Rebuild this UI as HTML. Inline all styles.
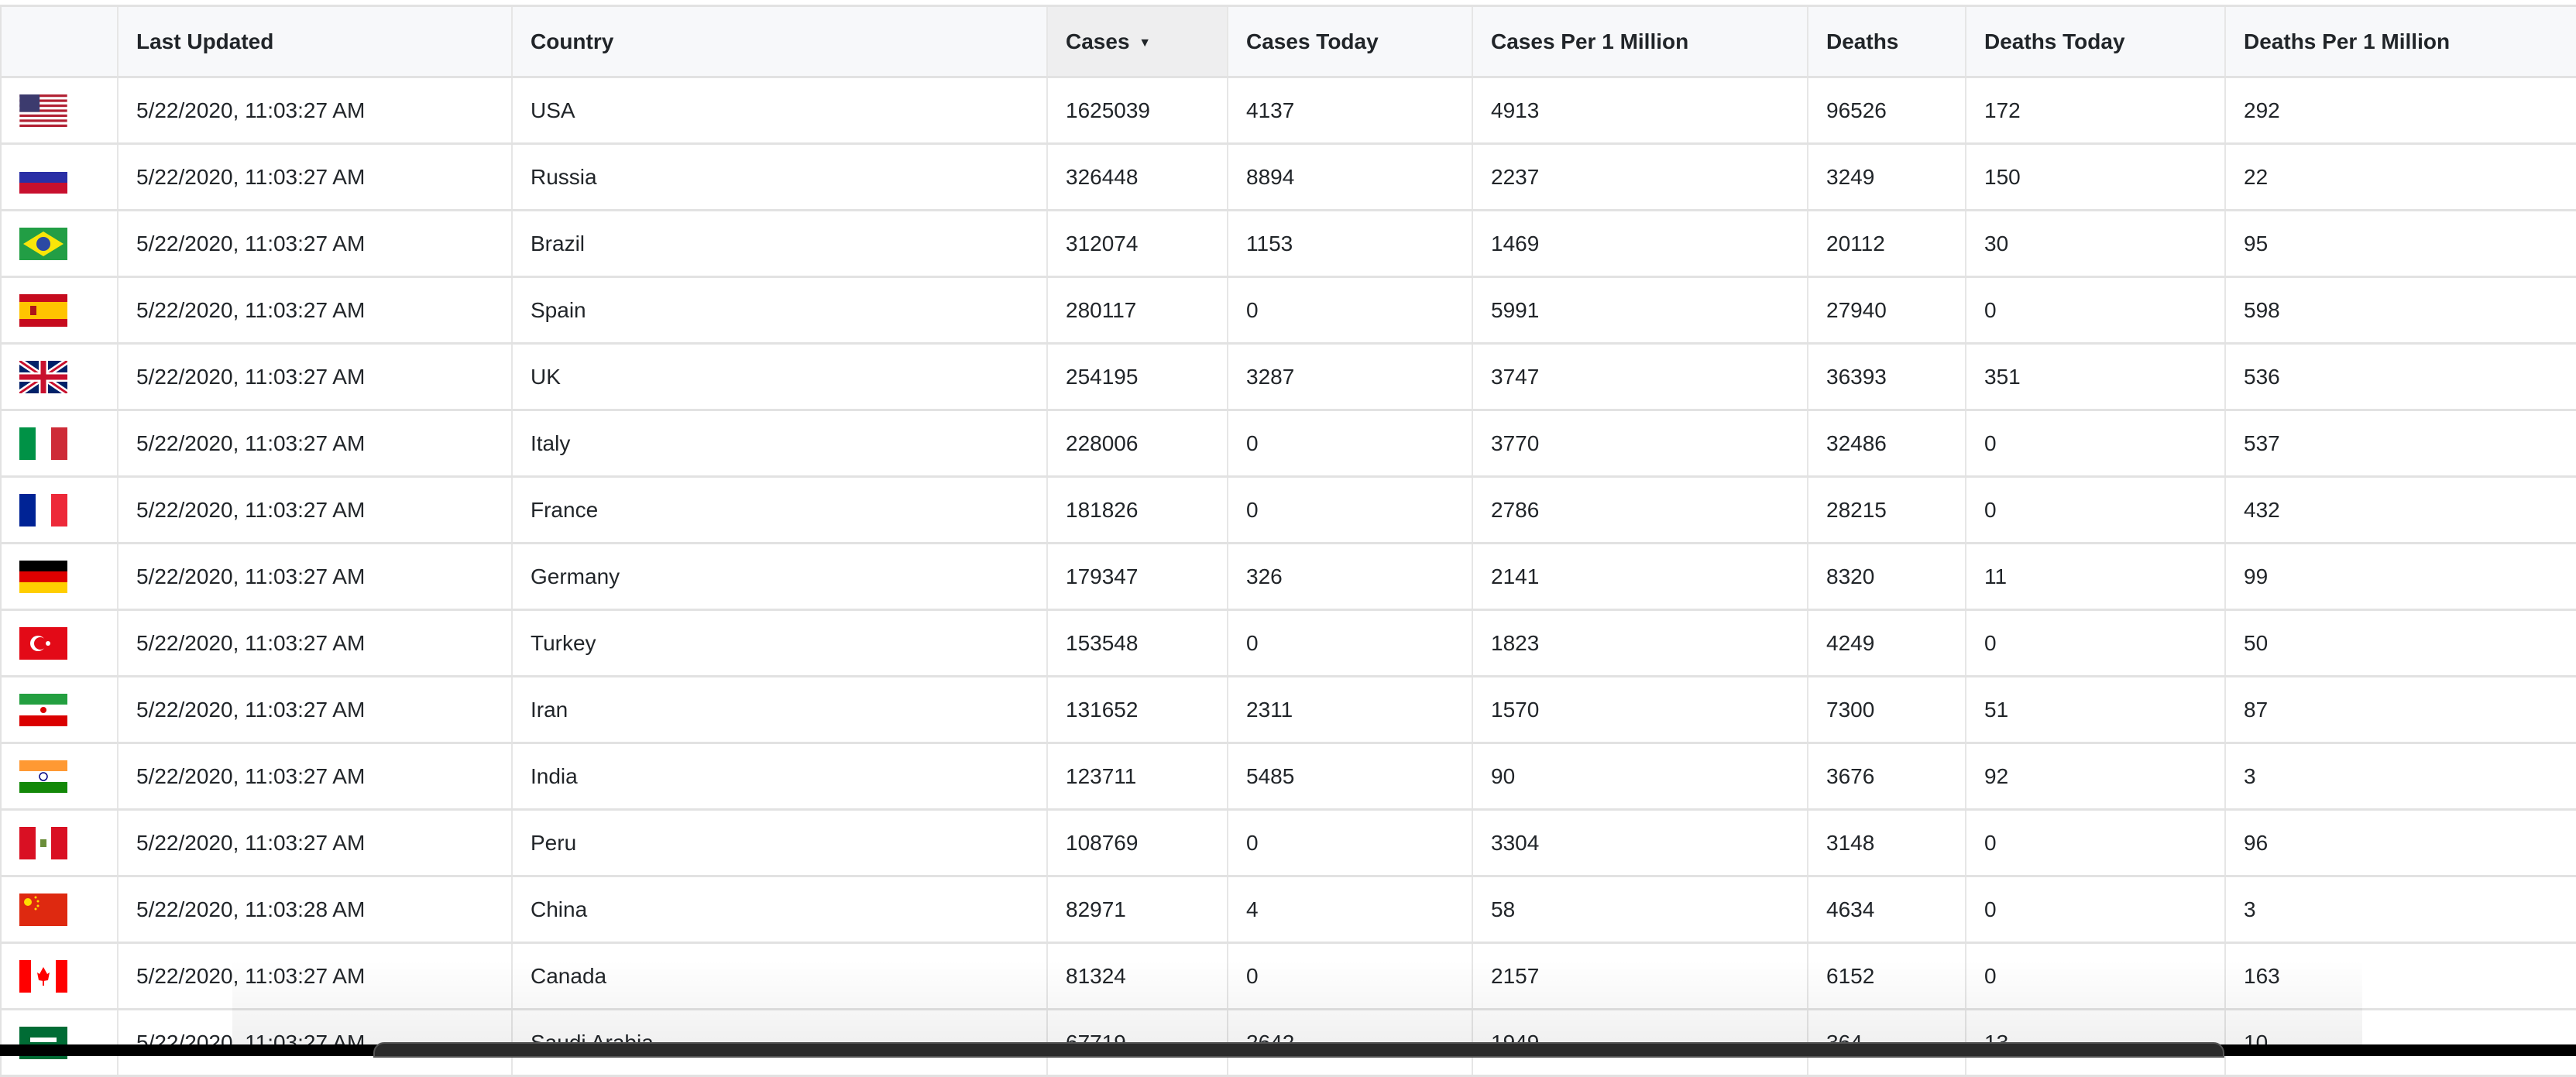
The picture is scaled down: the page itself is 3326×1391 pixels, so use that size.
<!DOCTYPE html>
<html><head><meta charset="utf-8"><style>
*{margin:0;padding:0;box-sizing:border-box}
body{width:3326px;height:1364px;overflow:hidden;background:#fff;font-family:"Liberation Sans",Arial,sans-serif;color:#212529;position:relative}
table{position:absolute;left:0;top:6px;border-collapse:collapse;table-layout:fixed;width:3326px;font-size:28px}
th,td{border-right:2px solid #e6e6e6;border-bottom:3px solid #e2e2e2;padding:0 0 0 23px;text-align:left;vertical-align:middle}
th{height:92px;background:#f7f8fa;font-weight:bold;border-top:3px solid #e2e2e2}
td{height:86px}
th:first-child,td:first-child{border-left:2px solid #e2e2e2;padding-left:23px}
th.s{background:#eeeeef}
svg{display:block}
.dock{position:absolute;left:0;top:1349px;width:3326px;height:15px;background:#000}
.dk{position:absolute;left:482px;top:1346px;width:2390px;height:20px;background:#2b2b2b;border-radius:14px 14px 0 0;border:2px solid #555}
.sh{position:absolute;left:300px;top:1240px;width:2750px;height:110px;background:linear-gradient(rgba(0,0,0,0),rgba(0,0,0,0.06));pointer-events:none}
</style></head><body>
<table>
<colgroup><col style="width:151px"><col style="width:509px"><col style="width:691px"><col style="width:233px"><col style="width:316px"><col style="width:433px"><col style="width:204px"><col style="width:335px"><col style="width:454px"></colgroup>
<tr><th></th><th>Last Updated</th><th>Country</th><th class="s">Cases <span style="font-size:16px;margin-left:4px;position:relative;top:-3px">▼</span></th><th>Cases Today</th><th>Cases Per 1 Million</th><th>Deaths</th><th>Deaths Today</th><th>Deaths Per 1 Million</th></tr>
<tr><td><svg width="62" height="42" viewBox="0 0 19 13"><rect width="19" height="13" fill="#fff"/><g fill="#b22234"><rect y="0" width="19" height="1"/><rect y="2" width="19" height="1"/><rect y="4" width="19" height="1"/><rect y="6" width="19" height="1"/><rect y="8" width="19" height="1"/><rect y="10" width="19" height="1"/><rect y="12" width="19" height="1"/></g><rect width="8" height="7" fill="#3c3b6e"/></svg></td><td>5/22/2020, 11:03:27 AM</td><td>USA</td><td>1625039</td><td>4137</td><td>4913</td><td>96526</td><td>172</td><td>292</td></tr>
<tr><td><svg width="62" height="42"><rect width="62" height="14" fill="#fff"/><rect y="14" width="62" height="14" fill="#2a2fa6"/><rect y="28" width="62" height="14" fill="#c8102e"/></svg></td><td>5/22/2020, 11:03:27 AM</td><td>Russia</td><td>326448</td><td>8894</td><td>2237</td><td>3249</td><td>150</td><td>22</td></tr>
<tr><td><svg width="62" height="42"><rect width="62" height="42" fill="#229e45"/><polygon points="31,5 57,21 31,37 5,21" fill="#f8e509"/><circle cx="31" cy="21" r="9" fill="#2b49a3"/></svg></td><td>5/22/2020, 11:03:27 AM</td><td>Brazil</td><td>312074</td><td>1153</td><td>1469</td><td>20112</td><td>30</td><td>95</td></tr>
<tr><td><svg width="62" height="42"><rect width="62" height="42" fill="#c60b1e"/><rect y="10" width="62" height="22" fill="#ffc400"/><rect x="14" y="15" width="8" height="12" fill="#ad1519"/></svg></td><td>5/22/2020, 11:03:27 AM</td><td>Spain</td><td>280117</td><td>0</td><td>5991</td><td>27940</td><td>0</td><td>598</td></tr>
<tr><td><svg width="62" height="42"><rect width="62" height="42" fill="#012169"/><path d="M0,0L62,42M62,0L0,42" stroke="#fff" stroke-width="8"/><path d="M0,0L62,42M62,0L0,42" stroke="#c8102e" stroke-width="3"/><path d="M31,0V42M0,21H62" stroke="#fff" stroke-width="12"/><path d="M31,0V42M0,21H62" stroke="#c8102e" stroke-width="7"/></svg></td><td>5/22/2020, 11:03:27 AM</td><td>UK</td><td>254195</td><td>3287</td><td>3747</td><td>36393</td><td>351</td><td>536</td></tr>
<tr><td><svg width="62" height="42"><rect width="21" height="42" fill="#009246"/><rect x="21" width="20" height="42" fill="#fff"/><rect x="41" width="21" height="42" fill="#ce2b37"/></svg></td><td>5/22/2020, 11:03:27 AM</td><td>Italy</td><td>228006</td><td>0</td><td>3770</td><td>32486</td><td>0</td><td>537</td></tr>
<tr><td><svg width="62" height="42"><rect width="21" height="42" fill="#002395"/><rect x="21" width="20" height="42" fill="#fff"/><rect x="41" width="21" height="42" fill="#ed2939"/></svg></td><td>5/22/2020, 11:03:27 AM</td><td>France</td><td>181826</td><td>0</td><td>2786</td><td>28215</td><td>0</td><td>432</td></tr>
<tr><td><svg width="62" height="42"><rect width="62" height="14" fill="#000"/><rect y="14" width="62" height="14" fill="#dd0000"/><rect y="28" width="62" height="14" fill="#ffce00"/></svg></td><td>5/22/2020, 11:03:27 AM</td><td>Germany</td><td>179347</td><td>326</td><td>2141</td><td>8320</td><td>11</td><td>99</td></tr>
<tr><td><svg width="62" height="42"><rect width="62" height="42" fill="#e30a17"/><circle cx="24" cy="21" r="10" fill="#fff"/><circle cx="27" cy="21" r="8" fill="#e30a17"/><circle cx="37" cy="21" r="3" fill="#fff"/></svg></td><td>5/22/2020, 11:03:27 AM</td><td>Turkey</td><td>153548</td><td>0</td><td>1823</td><td>4249</td><td>0</td><td>50</td></tr>
<tr><td><svg width="62" height="42"><rect width="62" height="14" fill="#239f40"/><rect y="14" width="62" height="14" fill="#fff"/><rect y="28" width="62" height="14" fill="#da0000"/><circle cx="31" cy="21" r="4" fill="#da0000"/></svg></td><td>5/22/2020, 11:03:27 AM</td><td>Iran</td><td>131652</td><td>2311</td><td>1570</td><td>7300</td><td>51</td><td>87</td></tr>
<tr><td><svg width="62" height="42"><rect width="62" height="14" fill="#ff9933"/><rect y="14" width="62" height="14" fill="#fff"/><rect y="28" width="62" height="14" fill="#138808"/><circle cx="31" cy="21" r="5" fill="none" stroke="#000080" stroke-width="1.5"/></svg></td><td>5/22/2020, 11:03:27 AM</td><td>India</td><td>123711</td><td>5485</td><td>90</td><td>3676</td><td>92</td><td>3</td></tr>
<tr><td><svg width="62" height="42"><rect width="21" height="42" fill="#d91023"/><rect x="21" width="20" height="42" fill="#fff"/><rect x="41" width="21" height="42" fill="#d91023"/><rect x="27" y="16" width="8" height="10" fill="#6b8e3a"/></svg></td><td>5/22/2020, 11:03:27 AM</td><td>Peru</td><td>108769</td><td>0</td><td>3304</td><td>3148</td><td>0</td><td>96</td></tr>
<tr><td><svg width="62" height="42"><rect width="62" height="42" fill="#de2910"/><circle cx="11" cy="11" r="5" fill="#ffde00"/><circle cx="21" cy="5" r="1.5" fill="#ffde00"/><circle cx="24" cy="10" r="1.5" fill="#ffde00"/><circle cx="24" cy="16" r="1.5" fill="#ffde00"/><circle cx="21" cy="20" r="1.5" fill="#ffde00"/></svg></td><td>5/22/2020, 11:03:28 AM</td><td>China</td><td>82971</td><td>4</td><td>58</td><td>4634</td><td>0</td><td>3</td></tr>
<tr><td><svg width="62" height="42"><rect width="62" height="42" fill="#fff"/><rect width="15" height="42" fill="#ff0000"/><rect x="47" width="15" height="42" fill="#ff0000"/><polygon points="31,9 36,18 39,16 37,26 31,27 25,26 23,16 26,18" fill="#ff0000"/><rect x="30" y="26" width="2" height="7" fill="#ff0000"/></svg></td><td>5/22/2020, 11:03:27 AM</td><td>Canada</td><td>81324</td><td>0</td><td>2157</td><td>6152</td><td>0</td><td>163</td></tr>
<tr><td><svg width="62" height="42"><rect width="62" height="42" fill="#006c35"/><rect x="14" y="14" width="34" height="6" fill="#fff"/><rect x="14" y="26" width="34" height="2" fill="#fff"/></svg></td><td>5/22/2020, 11:03:27 AM</td><td>Saudi Arabia</td><td>67719</td><td>2642</td><td>1949</td><td>364</td><td>13</td><td>10</td></tr>
</table>
<div class="sh"></div>
<div class="dock"></div>
<div class="dk"></div>
</body></html>
